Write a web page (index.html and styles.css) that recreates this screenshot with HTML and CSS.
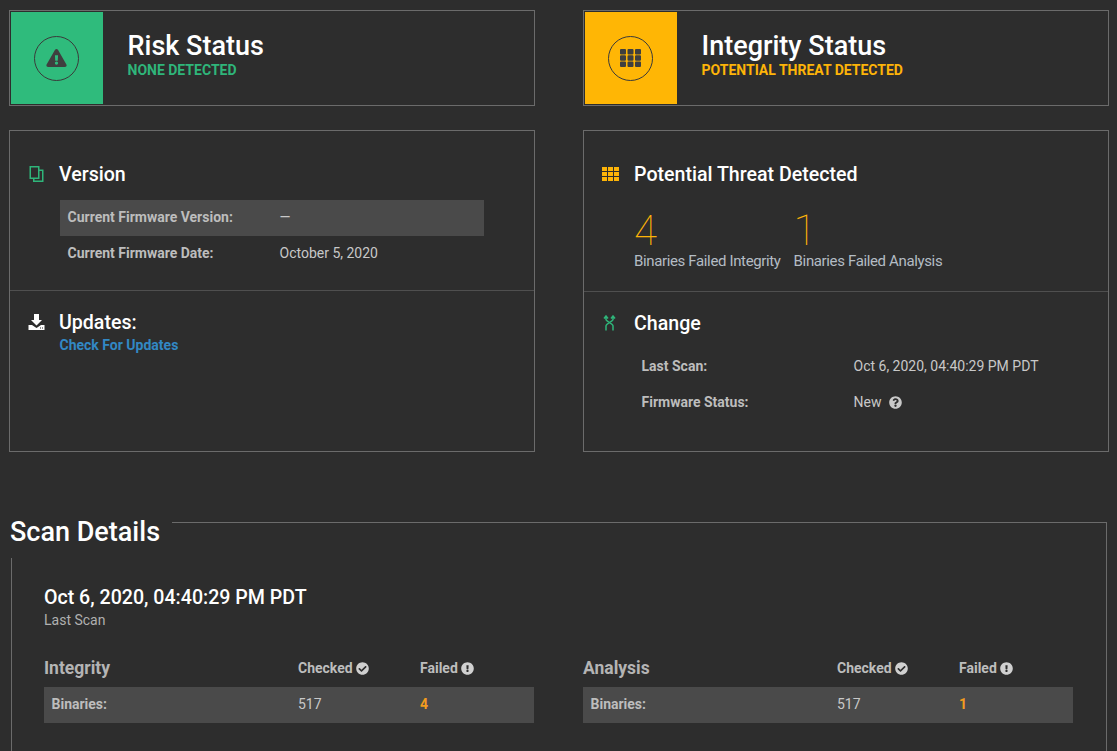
FILE: index.html
```html
<!DOCTYPE html>
<html lang="en">
<head>
    <meta charset="UTF-8">
    <meta name="viewport" content="width=device-width, initial-scale=1.0">
    <title>Firmware Scan</title>
    <link rel="stylesheet" href="styles.css">
</head>
<body>

    <div class="columns">
        <div class="status-card">
            <div class="status-tile tile-green">
                <div class="status-ring">
                    <svg class="ring-warning" viewBox="0 0 576 512"><path fill="currentColor" d="M569.517 440.013C587.975 472.007 564.806 512 527.94 512H48.054c-36.937 0-59.999-40.055-41.577-71.987L246.423 23.985c18.467-32.009 64.72-31.951 83.154 0l239.94 416.028zM288 354c-25.405 0-46 20.595-46 46s20.595 46 46 46 46-20.595 46-46-20.595-46-46-46zm-43.673-165.346l7.418 136c.347 6.364 5.609 11.346 11.982 11.346h48.546c6.373 0 11.635-4.982 11.982-11.346l7.418-136c.375-6.874-5.098-12.654-11.982-12.654h-63.383c-6.884 0-12.356 5.78-11.981 12.654z"/></svg>
                </div>
            </div>
            <div class="status-text">
                <h1>Risk Status</h1>
                <p class="status-sub green">NONE DETECTED</p>
            </div>
        </div>

        <div class="status-card">
            <div class="status-tile tile-yellow">
                <div class="status-ring">
                    <svg class="ring-grid" viewBox="0 0 21 18"><path fill="currentColor" d="M0 1a1 1 0 0 1 1-1h4a1 1 0 0 1 1 1v3.500a1 1 0 0 1-1 1H1a1 1 0 0 1-1-1zM7.500 1a1 1 0 0 1 1-1h4a1 1 0 0 1 1 1v3.500a1 1 0 0 1-1 1h-4a1 1 0 0 1-1-1zM15 1a1 1 0 0 1 1-1h4a1 1 0 0 1 1 1v3.500a1 1 0 0 1-1 1h-4a1 1 0 0 1-1-1zM0 7.250a1 1 0 0 1 1-1h4a1 1 0 0 1 1 1v3.500a1 1 0 0 1-1 1H1a1 1 0 0 1-1-1zM7.500 7.250a1 1 0 0 1 1-1h4a1 1 0 0 1 1 1v3.500a1 1 0 0 1-1 1h-4a1 1 0 0 1-1-1zM15 7.250a1 1 0 0 1 1-1h4a1 1 0 0 1 1 1v3.500a1 1 0 0 1-1 1h-4a1 1 0 0 1-1-1zM0 13.500a1 1 0 0 1 1-1h4a1 1 0 0 1 1 1V17a1 1 0 0 1-1 1H1a1 1 0 0 1-1-1zM7.500 13.500a1 1 0 0 1 1-1h4a1 1 0 0 1 1 1V17a1 1 0 0 1-1 1h-4a1 1 0 0 1-1-1zM15 13.500a1 1 0 0 1 1-1h4a1 1 0 0 1 1 1V17a1 1 0 0 1-1 1h-4a1 1 0 0 1-1-1z"/></svg>
                </div>
            </div>
            <div class="status-text">
                <h1>Integrity Status</h1>
                <p class="status-sub yellow">POTENTIAL THREAT DETECTED</p>
            </div>
        </div>
    </div>

    <div class="columns panels">
        <div class="panel">
            <div class="panel-block version-block">
                <div class="block-title">
                    <svg class="block-icon icon-left green" viewBox="0 0 14 16"><path fill="none" stroke="currentColor" stroke-width="1.500" d="M.75.75h8.500v11.500H.75zM9.250 4.250h4v11h-9v-3"/></svg>
                    <h2>Version</h2>
                </div>
                <div class="info-rows version-rows">
                    <div class="info-row shaded"><span class="info-label">Current Firmware Version:</span><span>—</span></div>
                    <div class="info-row"><span class="info-label">Current Firmware Date:</span><span>October 5, 2020</span></div>
                </div>
            </div>
            <div class="panel-block updates-block">
                <div class="block-title">
                    <svg class="block-icon icon-left white" viewBox="0 0 16 16"><path fill="currentColor" fill-rule="evenodd" d="M5.500 0h5v6h3L8 11.500 2.500 6h3zM0 11h3.500L8 14l4.500-3H16v5H0zM11.500 13.500v1h1v-1zM13.500 13.500v1h1v-1z"/></svg>
                    <h2>Updates:</h2>
                </div>
                <a class="update-link" href="#">Check For Updates</a>
            </div>
        </div>

        <div class="panel">
            <div class="panel-block threat-block">
                <div class="block-title">
                    <svg class="block-icon yellow" viewBox="0 0 17 14"><path fill="currentColor" d="M0 0h5v4H0zM6 0h5v4H6zM12 0h5v4h-5zM0 5h5v4H0zM6 5h5v4H6zM12 5h5v4h-5zM0 10h5v4H0zM6 10h5v4H6zM12 10h5v4h-5z"/></svg>
                    <h2>Potential Threat Detected</h2>
                </div>
                <div class="counts">
                    <div class="count">
                        <div class="count-num">4</div>
                        <div class="count-label">Binaries Failed Integrity</div>
                    </div>
                    <div class="count">
                        <div class="count-num">1</div>
                        <div class="count-label">Binaries Failed Analysis</div>
                    </div>
                </div>
            </div>
            <div class="panel-block change-block">
                <div class="block-title">
                    <svg class="block-icon icon-change green" viewBox="0 0 12 16"><path fill="none" stroke="currentColor" stroke-width="1.500" d="M2.500 1.500v3c0 2 7 4 7 6.500v4.500M9.500 1.500v3c0 2-7 4-7 6.500v4.500M.5 3.500l2-2.500 2 2.500M7.500 3.500l2-2.500 2 2.500"/></svg>
                    <h2>Change</h2>
                </div>
                <div class="info-rows change-rows">
                    <div class="info-row"><span class="info-label">Last Scan:</span><span>Oct 6, 2020, 04:40:29 PM PDT</span></div>
                    <div class="info-row"><span class="info-label">Firmware Status:</span><span>New<svg class="help-icon" viewBox="0 0 512 512"><path fill="currentColor" d="M504 256c0 136.997-111.043 248-248 248S8 392.997 8 256C8 119.083 119.043 8 256 8s248 111.083 248 248zM262.655 90c-54.497 0-89.255 22.957-116.549 63.758-3.536 5.286-2.353 12.415 2.715 16.258l34.699 26.310c5.205 3.947 12.621 3.008 16.665-2.122 17.864-22.658 30.113-35.797 57.303-35.797 20.429 0 45.698 13.148 45.698 32.958 0 14.976-12.363 22.667-32.534 33.976C247.128 238.528 216 254.941 216 296v4c0 6.627 5.373 12 12 12h56c6.627 0 12-5.373 12-12v-1.333c0-28.462 83.186-29.647 83.186-106.667 0-58.002-60.165-102-116.531-102zM256 338c-25.365 0-46 20.635-46 46 0 25.364 20.635 46 46 46s46-20.636 46-46c0-25.365-20.635-46-46-46z"/></svg></span></div>
                </div>
            </div>
        </div>
    </div>

    <section class="scan">
        <div class="scan-head">
            <h2>Scan Details</h2>
            <div class="scan-rule"></div>
        </div>
        <div class="scan-body">
            <div class="scan-date">Oct 6, 2020, 04:40:29 PM PDT</div>
            <div class="scan-date-label">Last Scan</div>

            <div class="scan-tables">
                <div class="scan-table">
                    <div class="scan-row scan-row-head">
                        <h3>Integrity</h3>
                        <span class="col-head">Checked<svg class="mini-icon" viewBox="0 0 512 512"><path fill="currentColor" d="M504 256c0 136.967-111.033 248-248 248S8 392.967 8 256 119.033 8 256 8s248 111.033 248 248zM227.314 387.314l184-184c6.248-6.248 6.248-16.379 0-22.627l-22.627-22.627c-6.248-6.249-16.379-6.249-22.628 0L216 308.118l-70.059-70.059c-6.248-6.248-16.379-6.248-22.628 0l-22.627 22.627c-6.248 6.248-6.248 16.379 0 22.627l104 104c6.249 6.249 16.379 6.249 22.628.001z"/></svg></span>
                        <span class="col-head">Failed<svg class="mini-icon" viewBox="0 0 512 512"><path fill="currentColor" d="M504 256c0 136.997-111.043 248-248 248S8 392.997 8 256C8 119.083 119.043 8 256 8s248 111.083 248 248zm-248 50c-25.405 0-46 20.595-46 46s20.595 46 46 46 46-20.595 46-46-20.595-46-46-46zm-43.673-165.346l7.418 136c.347 6.364 5.609 11.346 11.982 11.346h48.546c6.373 0 11.635-4.982 11.982-11.346l7.418-136c.375-6.874-5.098-12.654-11.982-12.654h-63.383c-6.884 0-12.356 5.780-11.981 12.654z"/></svg></span>
                    </div>
                    <div class="scan-row scan-row-data">
                        <span class="info-label">Binaries:</span>
                        <span>517</span>
                        <span class="failed-num">4</span>
                    </div>
                </div>

                <div class="scan-table">
                    <div class="scan-row scan-row-head">
                        <h3>Analysis</h3>
                        <span class="col-head">Checked<svg class="mini-icon" viewBox="0 0 512 512"><path fill="currentColor" d="M504 256c0 136.967-111.033 248-248 248S8 392.967 8 256 119.033 8 256 8s248 111.033 248 248zM227.314 387.314l184-184c6.248-6.248 6.248-16.379 0-22.627l-22.627-22.627c-6.248-6.249-16.379-6.249-22.628 0L216 308.118l-70.059-70.059c-6.248-6.248-16.379-6.248-22.628 0l-22.627 22.627c-6.248 6.248-6.248 16.379 0 22.627l104 104c6.249 6.249 16.379 6.249 22.628.001z"/></svg></span>
                        <span class="col-head">Failed<svg class="mini-icon" viewBox="0 0 512 512"><path fill="currentColor" d="M504 256c0 136.997-111.043 248-248 248S8 392.997 8 256C8 119.083 119.043 8 256 8s248 111.083 248 248zm-248 50c-25.405 0-46 20.595-46 46s20.595 46 46 46 46-20.595 46-46-20.595-46-46-46zm-43.673-165.346l7.418 136c.347 6.364 5.609 11.346 11.982 11.346h48.546c6.373 0 11.635-4.982 11.982-11.346l7.418-136c.375-6.874-5.098-12.654-11.982-12.654h-63.383c-6.884 0-12.356 5.780-11.981 12.654z"/></svg></span>
                    </div>
                    <div class="scan-row scan-row-data">
                        <span class="info-label">Binaries:</span>
                        <span>517</span>
                        <span class="failed-num">1</span>
                    </div>
                </div>
            </div>
        </div>
    </section>

</body>
</html>
```

FILE: styles.css
```css
html, body {
    height: 751px;
    overflow: hidden;
}

body {
    margin: 0;
    padding: 10px 8px 0 9px;
    box-sizing: border-box;
    background: #2d2d2d;
    color: #c8c8c8;
    font-family: Roboto, Arial, sans-serif;
    font-size: 14px;
}

h1, h2, h3, p {
    margin: 0;
}

.columns {
    display: grid;
    grid-template-columns: 526px 526px;
    gap: 48px;
}

.green { color: #2fb57a; }
.yellow { color: #fdb408; }
.white { color: #fff; }

/* top status cards */
.status-card {
    display: flex;
    height: 96px;
    box-sizing: border-box;
    padding: 1px;
    border: 1px solid #6b6b6b;
}

.status-tile {
    width: 92px;
    box-sizing: border-box;
    padding-right: 1px;
    display: flex;
    align-items: center;
    justify-content: center;
    color: #3f3f3f;
}

.tile-green { background: #2fbb7c; }
.tile-yellow { background: #ffb605; }

.status-ring {
    width: 45px;
    height: 45px;
    box-sizing: border-box;
    border: 1px solid #3a3a3a;
    border-radius: 50%;
    display: flex;
    align-items: center;
    justify-content: center;
}

.ring-warning {
    width: 21px;
    height: 18px;
}

.ring-grid {
    width: 21px;
    height: 18px;
}

.status-text {
    padding: 18px 0 0 24.5px;
}

.status-text h1 {
    font-size: 27px;
    font-weight: 500;
    line-height: 32px;
    color: #fff;
}

.status-sub {
    font-size: 14px;
    font-weight: 700;
    line-height: 16px;
}

/* version + threat panels */
.panels {
    margin-top: 24px;
}

.panel {
    height: 322px;
    box-sizing: border-box;
    border: 1px solid #6b6b6b;
}

.panel-block {
    box-sizing: border-box;
    padding-left: 18px;
}

.version-block {
    height: 160px;
    padding-top: 31px;
    border-bottom: 1px solid #4f4f4f;
}

.threat-block {
    height: 161px;
    padding-top: 31px;
    border-bottom: 1px solid #4f4f4f;
}

.updates-block {
    padding-top: 19px;
}

.change-block {
    padding-top: 19px;
}

.block-title {
    display: flex;
    align-items: center;
    height: 24px;
}

.block-title h2 {
    margin-top: 2px;
    font-size: 19.6px;
    font-weight: 500;
    line-height: 24px;
    color: #fff;
}

.block-icon {
    width: 17px;
    height: 16px;
    margin-right: 15px;
    flex: none;
}

.icon-left {
    margin-right: 14px;
}

.icon-change {
    width: 15px;
    margin-right: 17px;
}

.info-rows {
    margin-top: 14px;
}

.version-rows {
    margin-left: 32px;
    width: 424px;
}

.version-rows .info-row {
    padding-bottom: 2px;
}

.change-rows {
    margin-left: 32px;
    margin-top: 13px;
}

.info-row {
    display: grid;
    grid-template-columns: 212px 1fr;
    align-items: center;
    height: 36px;
    box-sizing: border-box;
    padding-left: 7.5px;
}

.info-row.shaded {
    background: #4a4a4a;
}

.info-label {
    font-weight: 700;
    color: #bdbdbd;
}

.help-icon {
    width: 13px;
    height: 13px;
    margin-left: 8px;
    vertical-align: -2px;
}

.update-link {
    display: block;
    margin: 3px 0 0 31.5px;
    font-weight: 700;
    line-height: 16px;
    color: #3288c4;
    text-decoration: none;
}

.counts {
    display: flex;
    gap: 13px;
    margin: 24px 0 0 32px;
}

.count-num {
    font-size: 42px;
    font-weight: 100;
    line-height: 42px;
    color: #fdb408;
}

.count-label {
    margin-top: -1px;
    font-size: 15px;
    letter-spacing: -.36px;
    line-height: 20px;
    color: #b4bcc4;
}

/* scan details */
.scan {
    margin: 70px 2px 0 2px;
}

.scan-head {
    display: flex;
    height: 36px;
    margin-left: -1px;
}

.scan-head h2 {
    font-size: 27px;
    font-weight: 500;
    line-height: 20px;
    padding-right: 12px;
    color: #fff;
}

.scan-rule {
    flex: 1;
    border-top: 1px solid #6b6b6b;
    border-right: 1px solid #6b6b6b;
}

.scan-body {
    padding: 28px 0 0 32px;
    height: 200px;
    box-sizing: border-box;
    border-left: 1px solid #6b6b6b;
    border-right: 1px solid #6b6b6b;
}

.scan-date {
    font-size: 19.6px;
    font-weight: 500;
    line-height: 24px;
    color: #fff;
}

.scan-date-label {
    margin-top: 1px;
    font-size: 14px;
    line-height: 18px;
    color: #b0b0b0;
}

.scan-tables {
    display: grid;
    grid-template-columns: 490px 490px;
    gap: 49px;
    margin-top: 26px;
}

.scan-row {
    display: grid;
    grid-template-columns: 254px 122px 1fr;
    align-items: center;
}

.scan-row-head {
    height: 24px;
    margin-bottom: 8px;
    padding-top: 2px;
    box-sizing: border-box;
}

.scan-row-head h3 {
    font-size: 17.5px;
    font-weight: 700;
    color: #b4b4b4;
}

.col-head {
    display: flex;
    align-items: center;
    font-weight: 700;
    color: #bdbdbd;
}

.mini-icon {
    width: 13px;
    height: 13px;
    margin-left: 3px;
    color: #d0d0d0;
}

.scan-row-data {
    height: 36px;
    box-sizing: border-box;
    padding-bottom: 2px;
    background: #4a4a4a;
}

.scan-row-data .info-label {
    padding-left: 7.5px;
}

.failed-num {
    font-weight: 700;
    color: #f39c1f;
}
```
